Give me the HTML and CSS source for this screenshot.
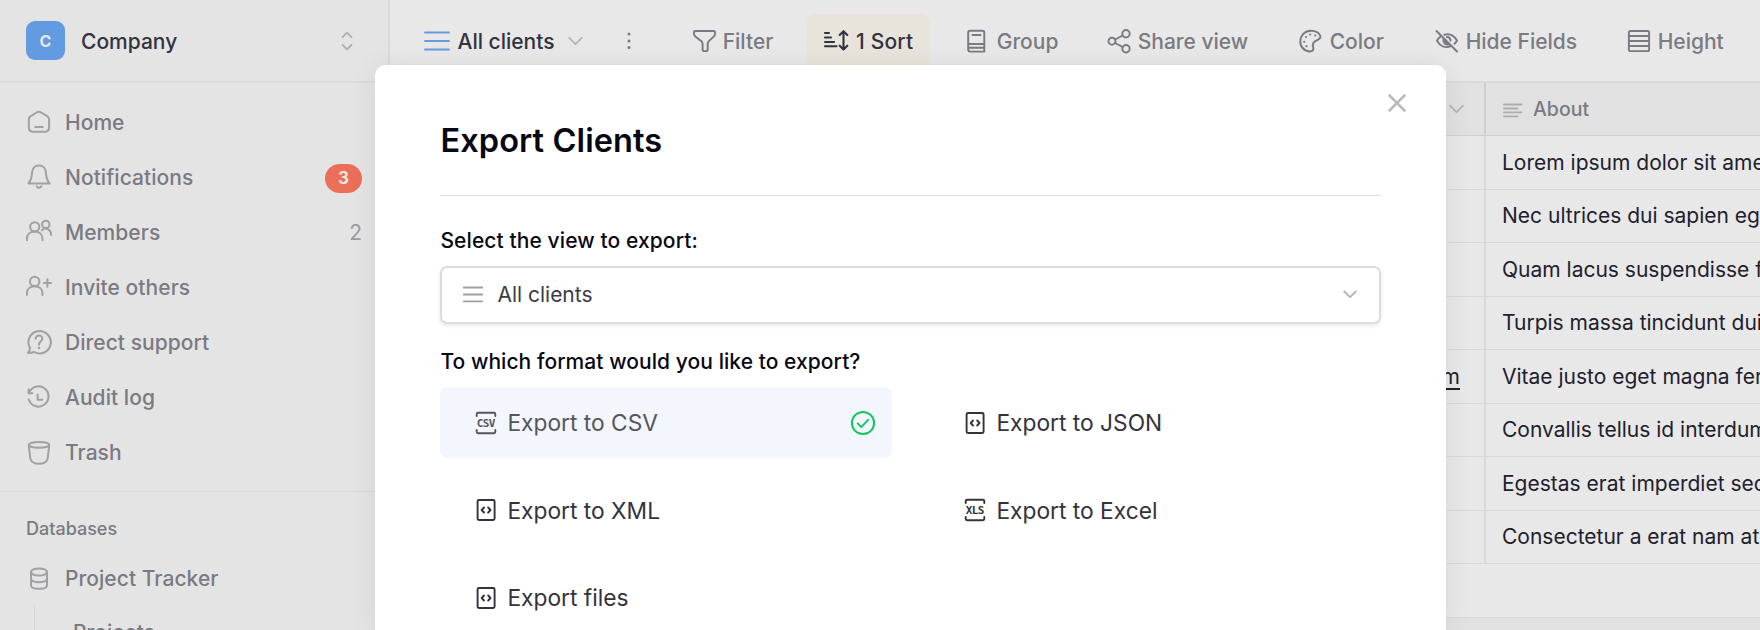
FILE: index.html
```html
<!DOCTYPE html>
<html lang="en">
<head>
<meta charset="utf-8">
<title>Export Clients</title>
<link rel="stylesheet" href="styles.css">
</head>
<body>
<div class="app">
  <aside class="sidebar">
    <div class="workspace">
      <span class="workspace-avatar">C</span>
      <span class="workspace-name">Company</span>
      <svg class="workspace-toggle" width="12" height="20" viewBox="0 0 12 20"><path d="M1.500 6.200 6 1.700l4.500 4.500M1.500 13.800 6 18.300l4.500-4.500"/></svg>
    </div>
    <nav class="menu">
      <a class="menu-item"><svg class="icon" viewBox="0 0 26 26"><path d="M2.800 10.500c0-1.500.6-2.500 1.900-3.300l6-3.700c1.500-.9 3-.9 4.500 0l6 3.700c1.300.8 1.900 1.800 1.900 3.300v7.500c0 3-1.500 4.800-4.500 4.800H7.300c-3 0-4.500-1.800-4.500-4.800zM9.200 18h7.600"/></svg><span>Home</span></a>
      <a class="menu-item"><svg class="icon" viewBox="0 0 26 26"><path d="M13 1.600c-4 0-6.600 2.800-6.900 6.800-.3 5.200-1 8-3.600 11.100h21c-2.600-3.100-3.300-5.900-3.600-11.100-.3-4-2.900-6.800-6.900-6.800zM10.600 22.300c1.200 2.100 3.600 2.100 4.800 0"/></svg><span>Notifications</span><b class="badge">3</b></a>
      <a class="menu-item"><svg class="icon" viewBox="0 0 26 26"><circle cx="8.700" cy="7.800" r="4.600"/><path d="M.9 21.300v-1.500c0-4.500 3.300-7.400 7.800-7.400s7.800 2.900 7.800 7.400v1.500"/><circle cx="19.800" cy="5.400" r="3.700"/><path d="M15.900 11.200c4-3.600 9.300-.8 9.300 4.700"/></svg><span>Members</span><em class="count">2</em></a>
      <a class="menu-item"><svg class="icon" viewBox="0 0 26 26"><circle cx="8.700" cy="7.500" r="4.700"/><path d="M.9 21v-1.400c0-4.500 3.300-7.400 7.800-7.400s7.800 2.900 7.800 7.400V21M17.700 9h7.400M21.400 5.300v7.400"/></svg><span>Invite others</span></a>
      <a class="menu-item"><svg class="icon" viewBox="0 0 26 26"><path d="M4 18.900A11.200 11.200 0 1 1 8.200 23c-2 .8-4 .9-6.200.9 1.300-1.500 2-3.200 2-5z"/><path d="M9.700 9.800c0-4.600 6.800-4.400 6.600-.1-.1 2.700-3.300 2.700-3.300 6"/><circle class="dot" cx="13" cy="19" r="1.200"/></svg><span>Direct support</span></a>
      <a class="menu-item"><svg class="icon" viewBox="0 0 26 26"><path d="M3 7.900A10.100 10.100 0 1 1 2.800 14.500M2.600 4.500v3.800h3.800M11.600 9.500v5.200h4.700"/></svg><span>Audit log</span></a>
      <a class="menu-item"><svg class="icon" viewBox="0 0 26 26"><ellipse cx="13" cy="4.800" rx="10.200" ry="2.900"/><path d="m2.800 5.300 1.400 12.500c.5 8 17.100 8 17.600 0l1.400-12.500"/></svg><span>Trash</span></a>
    </nav>
    <div class="databases">
      <div class="databases-title">Databases</div>
      <a class="menu-item"><svg class="icon" viewBox="0 0 26 26"><ellipse cx="13" cy="6" rx="8" ry="3.600"/><path d="M5 6v13.200c0 4.800 16 4.800 16 0V6M5 12.600c0 4.800 16 4.800 16 0"/></svg><span>Project Tracker</span></a>
      <div class="tables"><a class="table-link">Projects</a></div>
    </div>
  </aside>
  <main class="main">
    <header class="toolbar">
      <div class="tool view"><svg class="tool-icon" viewBox="0 0 26 26"><path d="M1 4.500h24M1 13h24M1 21.500h24"/></svg><span>All clients</span><svg class="chevron" width="15" height="10" viewBox="0 0 15 10"><path d="m1.200 1.800 6.300 6.300 6.300-6.300"/></svg></div>
      <div class="tool more"><svg width="6" height="20" viewBox="0 0 6 20"><circle cx="3" cy="3" r="1.500"/><circle cx="3" cy="10" r="1.500"/><circle cx="3" cy="16.500" r="1.500"/></svg></div>
      <div class="tool"><svg class="tool-icon" viewBox="0 0 26 26"><path d="M3.300 2.900h18.400q1.300 0 1.300 1.300v1.500c0 1.300-.4 2-1.300 2.900l-4.800 4.500c-.9.900-1.200 1.600-1.200 2.900v5.200c0 1.300-.5 1.900-1.700 1.900h-1.400c-1.300 0-2-.6-2-1.900v-4.900c0-1.300-.3-2.100-1.200-3.100L3.300 8.400C2.400 7.500 2 6.900 2 5.700V4.200q0-1.300 1.300-1.300z"/></svg><span>Filter</span></div>
      <div class="tool sort"><svg class="tool-icon" viewBox="0 0 26 26"><path d="M2 5h4M2 9.500h6M2 14h9M2 18.300h11.500M20.500 4v17M16.700 7l3.800-3.800L24.300 7M16.700 17.700l3.800 3.800 3.800-3.800"/></svg><span>1 Sort</span></div>
      <div class="tool"><svg class="tool-icon" viewBox="0 0 26 26"><path d="M4 2.800h12.500q1.800 0 1.800 1.800v19H4.200q-2 0-2-2v-17q0-1.800 1.800-1.800zM6.500 7h8M2.200 16h16M2.200 19.800h16"/></svg><span>Group</span></div>
      <div class="tool share"><svg class="tool-icon" viewBox="0 0 26 26"><circle cx="5" cy="13.200" r="3.500"/><circle cx="19" cy="5.700" r="3.700"/><circle cx="19" cy="20.700" r="3.700"/><path d="m8.200 11.500 7.500-4M8.200 15l7.500 4"/></svg><span>Share view</span></div>
      <div class="tool"><svg class="tool-icon" viewBox="0 0 26 26"><path d="M11.800 2.700C5.800 2.700 1.300 7.500 1.300 13.400c0 5.700 4.300 10 9.500 10 3.500 0 4-2.200 3.300-4.800-.9-3.400.3-5 3.700-6.300 3-1.200 4.100-2.300 3.600-4.200-.9-3.500-5.200-5.400-9.600-5.400z"/><g class="dot"><circle cx="11.200" cy="6.500" r="1.100"/><circle cx="7" cy="9" r="1.100"/><circle cx="5.200" cy="13.800" r="1.100"/><circle cx="7.500" cy="18.200" r="1.100"/><circle cx="16.300" cy="7.500" r="1.100"/></g></svg><span>Color</span></div>
      <div class="tool"><svg class="tool-icon" viewBox="0 0 26 26"><path d="M1.500 3 22 23.500M9.300 6.700c5.500-1.400 10 1.100 12.700 5.800-.7 1.300-1.500 2.400-2.500 3.300M5.300 8.800c-1.200 1-2.300 2.300-3.300 3.900 3 5.400 8.200 7.900 14 5.400M12 9c2 .1 3.300 1.500 3.500 3.500"/><path class="dot" d="M7.800 10c-1.700 4.600 2.700 8.900 7.300 7.200z"/></svg><span>Hide Fields</span></div>
      <div class="tool"><svg class="tool-icon" viewBox="0 0 26 26"><path d="M3.500 2.900h17q1.600 0 1.600 1.600v17q0 1.600-1.600 1.600h-17q-1.600 0-1.600-1.600v-17q0-1.600 1.600-1.600zM2 7.900h20M2 12.900h20M2 18h20"/></svg><span>Height</span></div>
    </header>
    <section class="grid">
      <div class="grid-row grid-head"><div class="cell"><svg class="chevron" width="15" height="10" viewBox="0 0 15 10"><path d="m1.200 1.800 6.300 6.300 6.300-6.300"/></svg></div><div class="cell"><svg class="about-icon" width="20" height="15" viewBox="0 0 20 15"><path d="M1 1.500h17.500M1 5.500h13.500M1 9.300h17.500M1 13.300h13.500"/></svg><span>About</span></div></div>
      <div class="grid-row"><div class="cell"></div><div class="cell">Lorem ipsum dolor sit amet</div></div>
      <div class="grid-row"><div class="cell"></div><div class="cell">Nec ultrices dui sapien eget</div></div>
      <div class="grid-row"><div class="cell"></div><div class="cell">Quam lacus suspendisse faucibus</div></div>
      <div class="grid-row"><div class="cell"></div><div class="cell">Turpis massa tincidunt dui ut</div></div>
      <div class="grid-row"><div class="cell"><u>m</u></div><div class="cell">Vitae justo eget magna fermentum</div></div>
      <div class="grid-row"><div class="cell"></div><div class="cell">Convallis tellus id interdum velit</div></div>
      <div class="grid-row"><div class="cell"></div><div class="cell">Egestas erat imperdiet sed euismod</div></div>
      <div class="grid-row"><div class="cell"></div><div class="cell">Consectetur a erat nam at lectus</div></div>
      <div class="grid-space"></div>
      <div class="grid-foot"></div>
    </section>
  </main>
</div>
<div class="modal">
  <svg class="modal-close" width="20" height="20" viewBox="0 0 20 20"><path d="m2.500 2.500 15 15M17.500 2.500l-15 15"/></svg>
  <h1 class="modal-title">Export Clients</h1>
  <div class="label label-view">Select the view to export:</div>
  <div class="select"><svg class="select-icon" width="20" height="17" viewBox="0 0 20 17"><path d="M.7 1.500h18.600M.7 8.500h18.600M.7 15.300h18.600"/></svg><span>All clients</span><svg class="chevron" width="14" height="9" viewBox="0 0 14 9"><path d="m1.200 1.500 5.800 5.600 5.800-5.600"/></svg></div>
  <div class="label label-format">To which format would you like to export?</div>
  <div class="options">
    <div class="option selected"><svg class="file-icon" viewBox="0 0 22 24"><path d="M1.700 5V3.200q0-1.400 1.400-1.400h15.800q1.400 0 1.400 1.400V5M1.700 19v1.800q0 1.400 1.400 1.400h15.800q1.400 0 1.400-1.400V19"/><text x="11" y="16" textLength="18.500" lengthAdjust="spacing">CSV</text></svg><span>Export to CSV</span><svg class="check" width="26" height="26" viewBox="0 0 26 26"><circle cx="13" cy="13" r="11.100"/><path d="m7.700 13.400 3.600 3.700 6.800-7.200"/></svg></div>
    <div class="option"><svg class="file-icon" viewBox="0 0 22 24"><path d="M4 2h14.200q1.400 0 1.400 1.400v17.200q0 1.400-1.400 1.400H4q-1.400 0-1.400-1.400V3.400Q2.600 2 4 2zM9 9.500 6.700 12 9 14.500M13.200 9.500l2.300 2.500-2.300 2.500"/></svg><span>Export to JSON</span></div>
    <div class="option"><svg class="file-icon" viewBox="0 0 22 24"><path d="M4 2h14.200q1.400 0 1.400 1.400v17.200q0 1.400-1.400 1.400H4q-1.400 0-1.400-1.400V3.400Q2.600 2 4 2zM9 9.500 6.700 12 9 14.500M13.200 9.500l2.300 2.500-2.300 2.500"/></svg><span>Export to XML</span></div>
    <div class="option"><svg class="file-icon" viewBox="0 0 22 24"><path d="M1.700 5V3.200q0-1.400 1.400-1.400h15.800q1.400 0 1.400 1.400V5M1.700 19v1.800q0 1.400 1.400 1.400h15.800q1.400 0 1.400-1.400V19"/><text x="11" y="16" textLength="18.500" lengthAdjust="spacing">XLS</text></svg><span>Export to Excel</span></div>
    <div class="option"><svg class="file-icon" viewBox="0 0 22 24"><path d="M4 2h14.200q1.400 0 1.400 1.400v17.200q0 1.400-1.400 1.400H4q-1.400 0-1.400-1.400V3.400Q2.600 2 4 2zM9 9.500 6.700 12 9 14.500M13.200 9.500l2.300 2.500-2.300 2.500"/></svg><span>Export files</span></div>
  </div>
</div>
</body>
</html>
```
FILE: styles.css
```css
* { box-sizing: border-box; }
body { margin: 0; width: 1760px; height: 630px; overflow: hidden; position: relative; font-family: Inter, "Liberation Sans", sans-serif; font-size: 21px; color: #1f202d; background: #e8e8e8; }
svg { fill: none; stroke: currentColor; stroke-width: 1.800; stroke-linecap: round; stroke-linejoin: round; flex: none; display: block; }
.dot { fill: currentColor; stroke: none; }

.app { display: flex; height: 630px; overflow: hidden; }
.sidebar { width: 390px; flex: none; background: #e4e4e4; border-right: 2px solid #dadada; }
.workspace { height: 83px; border-bottom: 2px solid #dadada; display: flex; align-items: center; padding: 0 35px 0 26px; }
.workspace-avatar { width: 39px; height: 39px; border-radius: 9px; background: #629be1; color: #e8e8e8; display: grid; place-items: center; font-size: 16px; font-weight: 700; }
.workspace-name { margin-left: 16px; padding-top: 1px; font-weight: 500; color: #32333e; flex: 1; }
.workspace-toggle { color: #adadaf; }
.menu { padding-top: 11.500px; height: 409px; border-bottom: 1.500px solid #d9d9d9; }
.menu-item { height: 55.100px; display: flex; align-items: center; padding: 0 26px; gap: 13px; color: #7a7a82; font-weight: 500; letter-spacing: .05px; }
.icon { width: 26px; height: 26px; color: #a0a0a5; stroke-width: 2; }
.badge { margin-left: auto; margin-top: 2px; width: 37px; height: 29px; border-radius: 15px; background: #eb6f58; color: #f0e6e4; display: grid; place-items: center; font-size: 17px; font-weight: 700; }
.count { margin-left: auto; font-style: normal; font-weight: 400; color: #9c9ca2; }
.databases-title { height: 59px; padding: 16px 26px 0; line-height: 42px; font-size: 18px; font-weight: 500; color: #7a7a82; }
.tables { margin-left: 34px; border-left: 1.500px solid #d6d6d6; height: 24px; }
.table-link { display: block; padding-left: 38px; line-height: 54px; font-weight: 500; color: #7a7a82; }

.main { flex: 1; min-width: 0; display: flex; flex-direction: column; }
.toolbar { height: 83px; flex: none; border-bottom: 2px solid #dadada; padding-left: 34px; display: grid; grid-template-columns: 202px 66px 115px 159px 141px 192px 136px 192px 132px; align-items: center; }
.tool { display: flex; align-items: center; gap: 4.700px; color: #7a7a82; font-weight: 500; white-space: nowrap; }
.tool span { padding-top: 1px; }
.tool-icon { width: 26px; height: 26px; stroke-width: 1.950; }
.view { color: #32333e; gap: 7.500px; }
.view .tool-icon { color: #629be1; }
.view .chevron { margin-left: 6px; }
.more svg { fill: currentColor; stroke: none; }
.sort { align-self: stretch; margin: 14px 36px 14px 0; padding-left: 16px; gap: 7px; border-radius: 8px; background: #e8e4dc; color: #32333e; }
.sort .tool-icon { stroke-width: 2.100; }
.sort span { letter-spacing: .2px; }
.chevron { color: #b4b4b6; }

.grid { flex: 1; min-height: 0; display: flex; flex-direction: column; }
.grid-row { flex: none; display: grid; grid-template-columns: 1096px 1fr; height: 53.500px; border-bottom: 1.500px solid #d9d9d9; }
.cell { display: flex; align-items: center; white-space: nowrap; overflow: hidden; padding-left: 16px; }
.cell:first-child { border-right: 2px solid #d9d9d9; justify-content: flex-end; padding: 0 24px 0 0; }
.grid-head { background: #e1e1e1; height: 53px; font-size: 19.500px; font-weight: 500; color: #7a7a82; border-color: #cfcfcf; }
.grid-head .cell:first-child { border-color: #cfcfcf; padding-right: 20px; }
.about-icon { margin: 2px 10px 0 1px; color: #adadaf; }
.cell u { text-underline-offset: 4px; }
.grid-space { flex: none; height: 53.500px; border-bottom: 1.500px solid #d9d9d9; }
.grid-foot { flex: 1; background: #e1e1e1; }

/* Dialog floats over the grid */
.modal { position: absolute; left: 375.400px; top: 65px; width: 1070.600px; height: 565px; padding: 0 65px; background: #fff; border-radius: 10px 10px 0 0; box-shadow: 0 3px 28px rgba(0, 0, 0, .08); }
.modal-close { position: absolute; right: 38.500px; top: 28px; color: #bbbbbd; stroke-width: 2.700; }
.modal-title { margin: 0; height: 130.500px; padding-top: 56px; line-height: 40px; font-size: 32.500px; letter-spacing: .1px; font-weight: 600; color: #070814; border-bottom: 1.500px solid #dcdcdc; }
.label { font-weight: 500; color: #070814; line-height: 30px; letter-spacing: .1px; }
.label-view { margin-top: 30.500px; }
.select { margin-top: 10px; height: 58px; border: 2px solid #dcdcdc; border-radius: 7px; box-shadow: 0 2px 4px rgba(0, 0, 0, .09); display: flex; align-items: center; padding: 0 22px 2px 21px; gap: 14px; color: #3b3c45; }
.select-icon { color: #a0a0a2; }
.select .chevron { margin-left: auto; }
.label-format { margin-top: 23px; letter-spacing: .06px; }
.options { margin-top: 10px; display: grid; grid-template-columns: 452px 452px; column-gap: 37px; row-gap: 16.500px; }
.option { height: 71px; border-radius: 7px; display: flex; align-items: center; padding: 0 16px 0 35px; gap: 10px; font-size: 22.750px; color: #32333e; }
.selected { background: #f3f6fd; color: #55565c; }
.file-icon { width: 22px; height: 24px; stroke-width: 1.900; }
.file-icon text { fill: currentColor; stroke: none; font: 700 11px "DejaVu Sans Mono", "Liberation Mono", monospace; text-anchor: middle; }
.check { margin-left: auto; color: #12c55f; stroke-width: 2; }
```
